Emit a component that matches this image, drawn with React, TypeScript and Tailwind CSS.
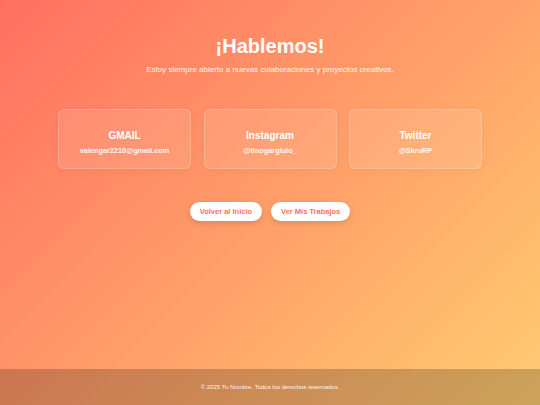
const CONTACTS = [
  { title: 'GMAIL', value: 'valengar2210@gmail.com' },
  { title: 'Instagram', value: '@tinogargiulo_' },
  { title: 'Twitter', value: '@SkruRP' },
]

export default function App() {
  return (
    <div
      className="flex min-h-screen flex-col bg-[linear-gradient(135deg,#ff6f61,#ffcc70)] text-white"
      style={{ fontFamily: '"Liberation Sans", Arial, sans-serif' }}
    >
      <main className="flex flex-1 flex-col items-center pt-[34px]">
        <h1 className="text-[20px] font-bold leading-[24px]">¡Hablemos!</h1>
        <p className="mt-[7px] text-[8px] leading-[10px] text-white/90">
          Estoy siempre abierto a nuevas colaboraciones y proyectos creativos.
        </p>

        <div className="mt-[34px] flex gap-[12.5px]">
          {CONTACTS.map((c) => (
            <div
              key={c.title}
              className="flex h-[60px] w-[133px] flex-col items-center justify-center rounded-[6px] border border-white/20 bg-white/10 pt-[8px] shadow-[0_2px_8px_rgba(0,0,0,0.04)]"
            >
              <div className="text-[10px] font-bold leading-[12px]">{c.title}</div>
              <div className="mt-[4px] text-[7.3px] font-bold leading-[10px] text-white/90">{c.value}</div>
            </div>
          ))}
        </div>

        <div className="mt-[33px] flex gap-[9px]">
          <button className="h-[19px] rounded-full bg-white px-[10px] text-[7.5px] font-bold text-[#ff6f61] shadow-[0_2px_6px_rgba(0,0,0,0.15)]">
            Volver al Inicio
          </button>
          <button className="h-[19px] rounded-full bg-white px-[10px] text-[7.5px] font-bold text-[#ff6f61] shadow-[0_2px_6px_rgba(0,0,0,0.15)]">
            Ver Mis Trabajos
          </button>
        </div>
      </main>

      <footer className="flex h-[36px] items-center justify-center bg-black/20 text-[6px] text-white/90">
        © 2025 Tu Nombre. Todos los derechos reservados.
      </footer>
    </div>
  )
}
